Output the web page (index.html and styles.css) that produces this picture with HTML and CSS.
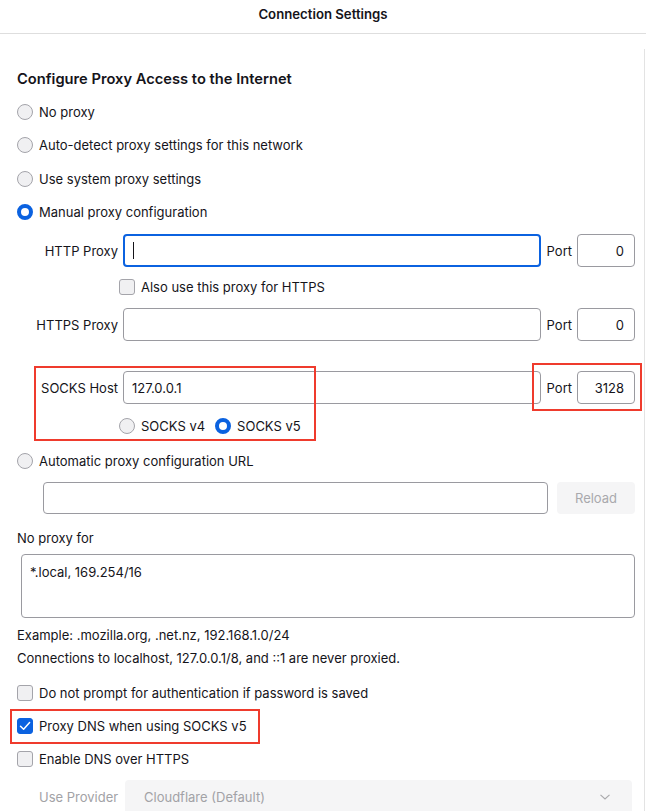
FILE: index.html
```html
<!DOCTYPE html>
<html>
<head>
<meta charset="utf-8">
<link rel="stylesheet" href="styles.css">
</head>
<body>
<div class="page">
  <header class="titlebar">Connection Settings</header>
  <main class="content">
    <h2 class="heading">Configure Proxy Access to the Internet</h2>

    <div class="row radio-row"><span class="radio"></span><span>No proxy</span></div>
    <div class="row radio-row"><span class="radio"></span><span>Auto-detect proxy settings for this network</span></div>
    <div class="row radio-row"><span class="radio"></span><span>Use system proxy settings</span></div>
    <div class="row radio-row"><span class="radio checked"></span><span>Manual proxy configuration</span></div>

    <div class="field-row r-http">
      <span class="flabel">HTTP Proxy</span>
      <div class="input focused"><span class="caret"></span></div>
      <span class="plabel">Port</span>
      <div class="input port">0</div>
    </div>
    <div class="row sub-row r-also"><span class="checkbox"></span><span>Also use this proxy for HTTPS</span></div>
    <div class="field-row r-https">
      <span class="flabel">HTTPS Proxy</span>
      <div class="input"></div>
      <span class="plabel">Port</span>
      <div class="input port">0</div>
    </div>
    <div class="field-row r-socks">
      <span class="flabel">SOCKS Host</span>
      <div class="input">127.0.0.1</div>
      <span class="plabel">Port</span>
      <div class="input port">3128</div>
    </div>
    <div class="row sub-row r-ver">
      <span class="radio"></span><span class="ver-label">SOCKS v4</span>
      <span class="radio checked"></span><span>SOCKS v5</span>
    </div>
    <div class="row radio-row r-auto"><span class="radio"></span><span>Automatic proxy configuration URL</span></div>
    <div class="url-row">
      <div class="input url"></div>
      <div class="button disabled">Reload</div>
    </div>

    <div class="noproxy-label">No proxy for</div>
    <div class="textarea">*.local, 169.254/16</div>
    <div class="note n1">Example: .mozilla.org, .net.nz, 192.168.1.0/24</div>
    <div class="note n2">Connections to localhost, 127.0.0.1/8, and ::1 are never proxied.</div>

    <div class="row check-row c1"><span class="checkbox"></span><span>Do not prompt for authentication if password is saved</span></div>
    <div class="row check-row"><span class="checkbox checked"><svg viewBox="0 0 16 16" width="16" height="16"><path d="M3.5 8.3 L6.6 11.3 L12.6 4.6" fill="none" stroke="#fff" stroke-width="1.5" stroke-linecap="round" stroke-linejoin="round"/></svg></span><span>Proxy DNS when using SOCKS v5</span></div>
    <div class="row check-row"><span class="checkbox"></span><span>Enable DNS over HTTPS</span></div>

    <div class="provider-row">
      <span class="provider-label">Use Provider</span>
      <div class="select">
        <span>Cloudflare (Default)</span>
        <svg class="chev" viewBox="0 0 12 8" width="12" height="8"><path d="M1.5 1.8 L6 6 L10.5 1.8" fill="none" stroke="#a8a8ab" stroke-width="1.1"/></svg>
      </div>
    </div>
  </main>

  <div class="mark m1"></div>
  <div class="mark m2"></div>
  <div class="mark m3"></div>
</div>
</body>
</html>
```

FILE: styles.css
```css
* { box-sizing: border-box; }
html, body { margin: 0; padding: 0; background: #fff; }
body {
  font-family: Inter, "Liberation Sans", sans-serif;
  font-size: 13px;
  color: #15141a;
  width: 646px;
  height: 811px;
  overflow: hidden;
}
.page { position: relative; width: 646px; height: 811px; }

.titlebar {
  height: 34px;
  border-bottom: 1px solid #dedede;
  display: flex;
  align-items: center;
  justify-content: center;
  font-weight: 600;
  font-size: 13.2px;
  padding-bottom: 6px;
}

.content {
  margin-top: 15px;
  width: 645px;
  border-right: 1px solid #e3e3e3;
  padding: 0 9px 0 17px;
  height: 800px;
}

.heading {
  margin: 0;
  padding-top: 15px;
  height: 46px;
  font-size: 14.7px;
  font-weight: 600;
  line-height: 30px;
}

.row { display: flex; align-items: center; }
.radio-row { height: 33.5px; }
.radio-row > .radio { margin-right: 6px; }

.radio {
  width: 16px; height: 16px;
  border-radius: 50%;
  border: 1px solid #a4a4aa;
  background: #f0f0f2;
  flex: none;
}
.radio.checked {
  border: 4.5px solid #0b62e0;
  background: #fff;
}

.checkbox {
  width: 16px; height: 16px;
  border-radius: 3px;
  border: 1px solid #a4a4aa;
  background: #f0f0f2;
  flex: none;
  margin-right: 6px;
  display: flex;
}
.checkbox.checked { background: #0b62e0; border-color: #0b62e0; }
.checkbox.checked svg { margin: -1px; }

.field-row {
  display: flex;
  align-items: center;
  height: 33px;
}
.r-http { margin-top: 5px; }
.r-https { margin-top: 4px; }
.r-socks { margin-top: 30px; }
.flabel { width: 101px; text-align: right; margin-right: 5px; flex: none; }
.input {
  height: 33px;
  border: 1px solid #9a9aa0;
  border-radius: 4px;
  flex: 1;
  display: flex;
  align-items: center;
  padding: 0 8px;
  background: #fff;
}
.input.focused { border: 2px solid #0b62e0; padding: 0 7px; }
.caret { width: 1px; height: 17px; background: #15141a; margin-left: 1px; }
.plabel { margin: 0 5px 0 6px; flex: none; }
.input.port { flex: none; width: 58px; justify-content: flex-end; padding-right: 10px; }

.sub-row { padding-left: 102px; }
.r-also { height: 34px; margin-top: 3px; }
.r-ver { height: 34px; margin-top: 5px; }
.r-ver .radio { margin-right: 6px; }
.ver-label { margin-right: 10px; }

.r-auto { height: 35px; }

.url-row {
  display: flex;
  margin-top: 4px;
  padding-left: 26px;
  height: 32px;
}
.input.url { height: 32px; flex: none; width: 505px; }
.button {
  margin-left: 9px;
  flex: 1;
  border-radius: 4px;
  display: flex;
  align-items: center;
  justify-content: center;
}
.button.disabled { background: #f5f5f6; color: #a9a9ad; }

.noproxy-label { margin-top: 14px; height: 20px; line-height: 20px; }
.textarea {
  margin-top: 6px;
  margin-left: 4px;
  height: 64px;
  border: 1px solid #9a9aa0;
  border-radius: 4px;
  padding: 9px 8px;
  line-height: 16px;
}
.note { height: 18px; line-height: 18px; font-size: 13px; }
.n1 { margin-top: 8px; }
.n2 { margin-top: 5px; }

.check-row { height: 33.3px; }
.c1 { margin-top: 9px; }

.provider-row {
  display: flex;
  align-items: center;
  margin-top: 4px;
  padding-left: 22px;
}
.provider-label { color: #a2a2a6; width: 86px; flex: none; }
.select {
  width: 507px;
  height: 34px;
  background: #f5f5f6;
  border-radius: 4px;
  display: flex;
  align-items: center;
  justify-content: space-between;
  padding: 0 21px 0 19px;
  color: #a2a2a6;
}

.mark { position: absolute; border: 2px solid #ef3b2d; }
.m1 { left: 34px; top: 366px; width: 282px; height: 75px; }
.m2 { left: 532px; top: 363px; width: 110px; height: 48px; }
.m3 { left: 10px; top: 709px; width: 250px; height: 35px; }
```
